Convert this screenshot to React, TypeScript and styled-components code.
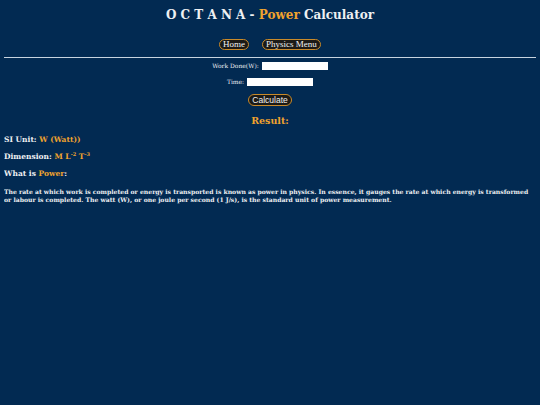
import React from "react";
import styled, { createGlobalStyle } from "styled-components";

const Global = createGlobalStyle`
  html, body { background: #022a52; }
  body {
    margin: 4px;
    color: #eef0f2;
    font-family: "DejaVu Serif", "Liberation Serif", serif;
  }
`;

const Title = styled.h1`
  margin: 4px 0 0;
  text-align: center;
  font-family: "DejaVu Serif", serif;
  font-size: 12px;
  font-weight: bold;
  line-height: 14px;
  color: #eef0f2;
`;

const Accent = styled.span`
  color: #f0a32e;
`;

const Nav = styled.nav`
  display: flex;
  justify-content: center;
  gap: 13px;
  margin-top: 17px;
`;

const PillButton = styled.button<{ $sans?: boolean }>`
  background: #1b1a17;
  color: #f2f2f2;
  border: 1px solid #c98a2a;
  border-radius: 6px;
  padding: 0 3px;
  height: 11px;
  font-family: ${(p) => (p.$sans ? '"Liberation Sans", Arial, sans-serif' : '"Liberation Serif", "Times New Roman", serif')};
  font-size: 9px;
  line-height: 9px;
  cursor: pointer;
`;

const Rule = styled.hr`
  margin: 7px 0 0;
  border: none;
  border-top: 1px solid #c7d3df;
`;

const Form = styled.form`
  display: flex;
  flex-direction: column;
  align-items: center;
  margin-top: 4px;
  gap: 8px;
`;

const Field = styled.label`
  display: flex;
  align-items: center;
  gap: 3px;
  font-size: 6px;
  line-height: 8px;
  font-family: "DejaVu Serif", serif;
`;

const Input = styled.input`
  width: 66px;
  height: 8px;
  box-sizing: border-box;
  border: none;
  padding: 0;
  background: #ffffff;
`;

const CalcButton = styled(PillButton)`
  height: 12px;
  padding: 0 3px;
  font-size: 8.5px;
`;

const ResultHeading = styled.h2`
  margin: 9px 0 0;
  text-align: center;
  font-size: 9.5px;
  line-height: 12px;
  color: #f0a32e;
`;

const InfoLine = styled.p`
  margin: 8px 0 0;
  font-size: 7.5px;
  font-weight: bold;
  line-height: 9px;
`;

const Sup = styled.sup`
  font-size: 5px;
  vertical-align: 3px;
  line-height: 0;
`;

const Description = styled.p`
  margin: 10px 0 0;
  font-size: 6.1px;
  font-weight: bold;
  line-height: 8px;
`;

export default function App() {
  return (
    <>
      <Global />
      <Title>
        O C T A N A - <Accent>Power</Accent> Calculator
      </Title>
      <Nav>
        <PillButton type="button">Home</PillButton>
        <PillButton type="button">Physics Menu</PillButton>
      </Nav>
      <Rule />
      <Form onSubmit={(e) => e.preventDefault()}>
        <Field>
          Work Done(W): <Input type="text" />
        </Field>
        <Field>
          Time: <Input type="text" />
        </Field>
        <CalcButton type="submit" $sans>
          Calculate
        </CalcButton>
      </Form>
      <ResultHeading>Result:</ResultHeading>
      <InfoLine>
        SI Unit: <Accent>W (Watt))</Accent>
      </InfoLine>
      <InfoLine>
        Dimension:{" "}
        <Accent>
          M L<Sup>-2</Sup> T<Sup>-3</Sup>
        </Accent>
      </InfoLine>
      <InfoLine>
        What is <Accent>Power</Accent>:
      </InfoLine>
      <Description>
        The rate at which work is completed or energy is transported is known as power in physics. In essence, it
        gauges the rate at which energy is transformed or labour is completed. The watt (W), or one joule per second
        (1 J/s), is the standard unit of power measurement.
      </Description>
    </>
  );
}
